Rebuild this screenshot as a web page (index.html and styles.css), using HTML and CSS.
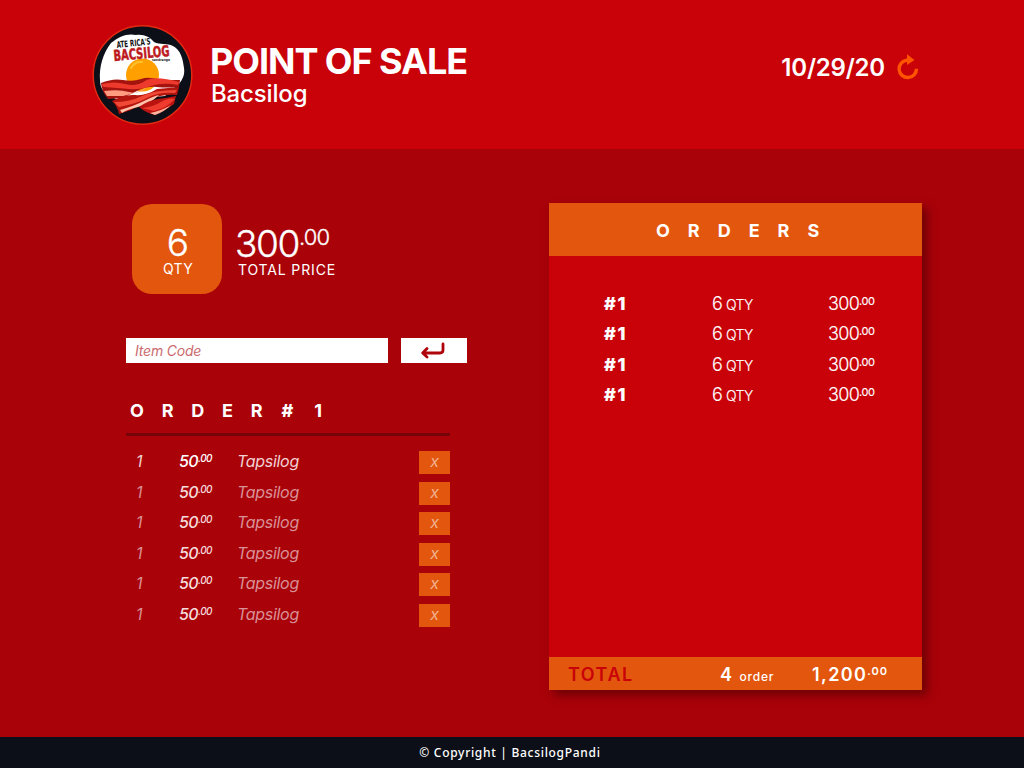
FILE: index.html
```html
<!DOCTYPE html>
<html lang="en">
<head>
<meta charset="utf-8">
<title>Point of Sale - Bacsilog</title>
<link rel="stylesheet" href="styles.css">
</head>
<body>
<header class="header">
  <div class="brand">
    <svg class="logo" viewBox="0 0 115 115" role="img" aria-label="Ate Rica's Bacsilog">
      <circle cx="57.5" cy="57" r="49.3" fill="#0c0f18" stroke="#e52a12" stroke-width="1.4"/>
      <path d="M15 62C14 49 18 35 26 25C34 18 43 15 51 17C59 16 65 19 69 24C75 27 82 25 88 28C96 32 98 42 99 50C100 56 98 61 94 66L80 78L35 82C18 78 15 69 15 62Z" fill="#fff"/>
      <circle cx="57.5" cy="57" r="16.5" fill="#ffa000"/>
      <path d="M46 50Q50 43 57 44" fill="none" stroke="#ffc02e" stroke-width="2" stroke-linecap="round"/>
      <path d="M16 65Q28 60 38 62T56 61T74 62L95 62L94 69Q82 70 72 69T52 73T37 80L23 81Q17 74 16 65Z" fill="#a5130f"/>
      <path d="M17 66Q29 63 40 66T60 63T94 64L93 67Q78 64 66 68T44 71T18 69Z" fill="#ee3a2c"/>
      <path d="M19 73Q34 71 44 74T62 69Q53 75 38 78L22 78Z" fill="#ff9b80"/>
      <path d="M27 83Q39 76 50 77T72 71L94 69L92 77Q78 76 67 81T46 92L34 96Q33 89 27 83Z" fill="#b4150f"/>
      <path d="M29 84Q45 84 57 78T92 72L90 75Q73 74 62 80T34 89Z" fill="#f04936"/>
      <path d="M35 92Q49 88 59 83T74 77Q65 86 53 89T37 95Z" fill="#ffc2ab"/>
      <path d="M54 89Q64 82 73 81T91 78L89 86Q78 94 70 97Q61 95 54 89Z" fill="#bb130f"/>
      <path d="M57 90Q68 89 76 84T90 81Q82 90 69 93Z" fill="#ef3b2d"/>
      <path d="M65 95Q76 93 86 87Q79 94 70 97Z" fill="#ffb49d"/>
      <text class="logo-small" x="32" y="30" textLength="34" lengthAdjust="spacingAndGlyphs" transform="rotate(-6 32 30)">ATE RICA'S</text>
      <text class="logo-name" x="29" y="43" textLength="56" lengthAdjust="spacingAndGlyphs" transform="rotate(-5 29 43)">BACSILOG</text>
      <text class="logo-sub" x="67" y="42.5" textLength="18" lengthAdjust="spacingAndGlyphs">sandrange</text>
    </svg>
    <div class="titles">
      <h1 class="title">POINT OF SALE</h1>
      <p class="subtitle">Bacsilog</p>
    </div>
  </div>
  <div class="date-box">
    <span class="date">10/29/20</span>
    <svg class="refresh" viewBox="0 0 24 28" aria-label="Refresh">
      <path d="M12.4 7.2H10.7A8.7 8.7 0 1 0 20.5 15.8" fill="none" stroke="#ff5500" stroke-width="3.4"/>
      <path d="M11 1.2L18.5 7L11 12Z" fill="#ff5500"/>
    </svg>
  </div>
</header>

<main class="main">
  <section class="entry">
    <div class="summary">
      <div class="qty-tile"><span class="qty-number">6</span><span class="qty-label">QTY</span></div>
      <div class="price">
        <div class="price-value">300<span class="price-cents">.00</span></div>
        <div class="price-label">TOTAL PRICE</div>
      </div>
    </div>
    <div class="code-form">
      <div class="code-input">Item Code</div>
      <button class="enter" aria-label="Enter">
        <svg class="enter-icon" viewBox="0 0 24 18"><path d="M22 2V8Q22 11 19 11H2M6 6.5L1.7 11L6 15" fill="none" stroke="#b0040b" stroke-width="2.8" stroke-linecap="round" stroke-linejoin="round"/></svg>
      </button>
    </div>
    <h2 class="order-title">ORDER<span class="order-hash">#</span><span class="order-number">1</span></h2>
    <div class="items">
      <div class="item item-active"><span>1</span><span class="item-price">50<span class="cents">.00</span></span><span class="item-name">Tapsilog</span><button class="remove">x</button></div>
      <div class="item"><span>1</span><span class="item-price">50<span class="cents">.00</span></span><span class="item-name">Tapsilog</span><button class="remove">x</button></div>
      <div class="item"><span>1</span><span class="item-price">50<span class="cents">.00</span></span><span class="item-name">Tapsilog</span><button class="remove">x</button></div>
      <div class="item"><span>1</span><span class="item-price">50<span class="cents">.00</span></span><span class="item-name">Tapsilog</span><button class="remove">x</button></div>
      <div class="item"><span>1</span><span class="item-price">50<span class="cents">.00</span></span><span class="item-name">Tapsilog</span><button class="remove">x</button></div>
      <div class="item"><span>1</span><span class="item-price">50<span class="cents">.00</span></span><span class="item-name">Tapsilog</span><button class="remove">x</button></div>
    </div>
  </section>

  <section class="orders">
    <h2 class="orders-title">ORDERS</h2>
    <div class="orders-list">
      <div class="order"><b class="order-id">#1</b><span class="order-qty">6 <span class="order-unit">QTY</span></span><span class="order-price">300<span class="order-cents">.00</span></span></div>
      <div class="order"><b class="order-id">#1</b><span class="order-qty">6 <span class="order-unit">QTY</span></span><span class="order-price">300<span class="order-cents">.00</span></span></div>
      <div class="order"><b class="order-id">#1</b><span class="order-qty">6 <span class="order-unit">QTY</span></span><span class="order-price">300<span class="order-cents">.00</span></span></div>
      <div class="order"><b class="order-id">#1</b><span class="order-qty">6 <span class="order-unit">QTY</span></span><span class="order-price">300<span class="order-cents">.00</span></span></div>
    </div>
    <div class="total">
      <span class="total-label">TOTAL</span>
      <span class="total-count">4 <span class="total-unit">order</span></span>
      <span class="total-price">1,200<span class="total-cents">.00</span></span>
    </div>
  </section>
</main>
<footer class="footer">© Copyright | BacsilogPandi</footer>
</body>
</html>
```
FILE: styles.css
```css
* { box-sizing: border-box; }
body { margin: 0; width: 1024px; height: 768px; overflow: hidden; display: flex; flex-direction: column; background: #a90209; color: #fff; font-family: Inter, "Liberation Sans", sans-serif; }
h1, h2, p { margin: 0; }
button { border: 0; padding: 0; font: inherit; color: inherit; }

.header { height: 149px; flex: none; background: #c90209; display: flex; justify-content: space-between; padding: 18px 104px 0 85px; }
.brand { display: flex; gap: 10px; }
.logo { width: 115px; height: 115px; }
.logo-small { font: 700 9px "DejaVu Sans Condensed", "DejaVu Sans", sans-serif; fill: #111; }
.logo-name { font: 700 15px "DejaVu Sans Condensed", "DejaVu Sans", sans-serif; fill: #bd1a1e; stroke: #bd1a1e; stroke-width: .5px; }
.logo-sub { font: 700 3.5px "DejaVu Sans", sans-serif; fill: #222; }
.titles { padding-top: 24px; }
.title { font-size: 36px; line-height: 38px; font-weight: 700; letter-spacing: -1.05px; white-space: nowrap; }
.subtitle { font-size: 24px; line-height: 28px; margin-left: 1px; font-weight: 500; letter-spacing: -0.15px; }
.date-box { display: flex; gap: 11px; padding-top: 35px; }
.date { font-size: 24px; line-height: 28px; font-weight: 600; letter-spacing: -0.2px; margin-top: 1px; }
.refresh { width: 24px; height: 28px; }

.main { height: 588px; flex: none; display: flex; padding: 54px 102px 0 126px; justify-content: space-between; }
.entry { width: 341px; padding-top: 1px; }
.summary { display: flex; height: 90px; padding-left: 6px; gap: 13px; }
.qty-tile { width: 90px; height: 90px; border-radius: 20px; background: #e3560d; display: flex; flex-direction: column; align-items: center; padding: 22px 0 0 2px; }
.qty-number { font-size: 37px; line-height: 34px; font-weight: 300; -webkit-text-stroke: .35px #fff; }
.qty-label { font-size: 14px; line-height: 18px; letter-spacing: .3px; }
.price { padding-top: 22px; white-space: nowrap; }
.price-value { font-size: 37px; line-height: 35px; font-weight: 300; letter-spacing: -1.4px; -webkit-text-stroke: .35px #fff; }
.price-cents { font-size: 22px; vertical-align: 12px; line-height: 0; letter-spacing: -.8px; }
.price-label { font-size: 14px; line-height: 18px; margin-left: 3px; letter-spacing: .85px; }
.code-form { display: flex; gap: 13px; height: 25px; margin-top: 44px; }
.code-input { width: 262px; background: #fff; color: #cb6b70; font-size: 14px; line-height: 25px; font-style: italic; padding-left: 9px; letter-spacing: -.2px; }
.enter { width: 66px; background: #fff; display: flex; align-items: center; justify-content: center; }
.enter-icon { width: 24px; height: 18px; margin: 1px 3px 0 0; }
.order-title { width: 324px; height: 73px; padding: 37px 0 0 4px; border-bottom: 3px solid #76050a; font-size: 18px; line-height: 22px; font-weight: 700; letter-spacing: 17.8px; }
.order-hash { font-weight: 800; letter-spacing: 21px; margin-left: 1px; }
.order-number { letter-spacing: 0; }
.items { width: 324px; padding-top: 15px; display: flex; flex-direction: column; gap: 7.6px; }
.item { height: 23px; display: grid; grid-template-columns: 43px 58px 1fr 31px; padding-left: 10px; font-size: 16px; line-height: 21px; font-style: italic; color: #d99096; }
.item-active { color: #f1d1d3; }
.item-price { color: #f5dcdc; font-weight: 500; letter-spacing: -.6px; }
.item-active .item-price { color: #fff; }
.cents { font-size: 10px; vertical-align: 5px; line-height: 0; }
.item-name { letter-spacing: -.3px; }
.remove { background: #e3560d; color: #f0b091; height: 23px; padding-bottom: 2px; }

.orders { width: 373px; height: 487px; background: #c90209; box-shadow: 5px 5px 9px rgba(50, 0, 0, .5); display: flex; flex-direction: column; }
.orders-title { height: 53px; background: #e3560d; font-size: 18px; line-height: 55px; font-weight: 700; letter-spacing: 18px; padding-left: 107px; }
.orders-list { flex: 1; padding-top: 37px; }
.order { display: grid; grid-template-columns: 108px 117px 1fr; height: 30.3px; padding-left: 54px; font-size: 18px; line-height: 22px; font-weight: 300; -webkit-text-stroke: .15px #fff; }
.order-id { font-weight: 800; letter-spacing: 1.8px; padding-left: 1px; }
.order-qty { padding-left: 1px; }
.order-unit { font-size: 14px; margin-left: -2px; letter-spacing: -.6px; }
.order-price { letter-spacing: -.7px; }
.order-cents { font-size: 11px; vertical-align: 5.5px; line-height: 0; letter-spacing: -.4px; font-weight: 400; }
.total { height: 33px; background: #e3560d; display: grid; grid-template-columns: 152px 91px 1fr; padding-left: 19px; font-size: 18px; line-height: 36px; font-weight: 600; letter-spacing: 1.5px; }
.total-label { color: #c90209; }
.total-price { padding-left: 1px; letter-spacing: 1.4px; }
.total-unit { font-size: 12px; letter-spacing: .8px; font-weight: 500; }
.total-cents { font-size: 11px; vertical-align: 6px; line-height: 0; letter-spacing: 1px; }
.footer { height: 31px; background: #0c0f18; text-align: center; font: 500 12px/31px "Noto Sans", sans-serif; letter-spacing: .7px; padding-right: 4px; }
```
